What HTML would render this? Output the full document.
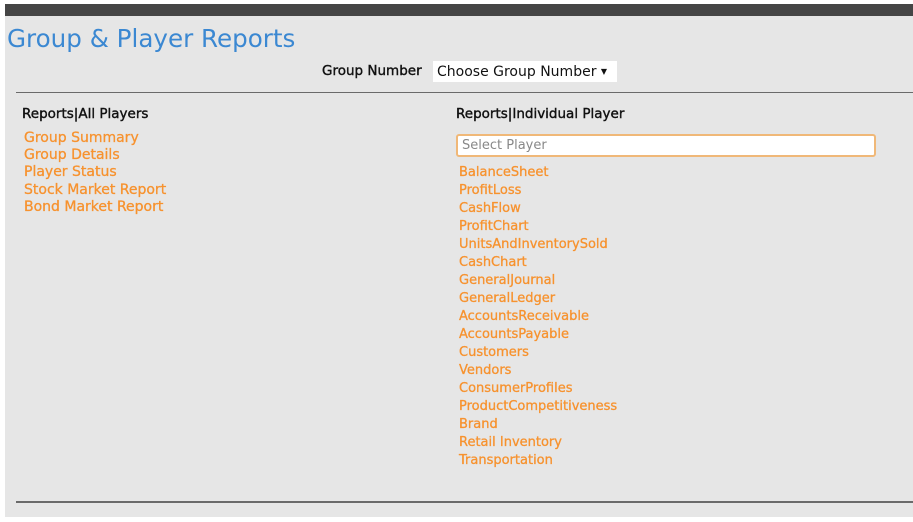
<!DOCTYPE html>
<html><head><style>
body{margin:0;width:913px;height:522px;background:#fff;position:relative;overflow:hidden;font-family:"DejaVu Sans","Liberation Sans",sans-serif}
.bg{position:absolute;left:5px;top:4px;width:908px;height:513px;background:#e6e6e6}
.bar{position:absolute;left:5px;top:4px;width:908px;height:12px;background:#454545}
.t{position:absolute;left:7px;top:24px;font-size:24.6px;color:#3b88d2;white-space:nowrap}
.gn{position:absolute;left:322px;top:63px;font-size:13.5px;color:#111;-webkit-text-stroke:0.4px #111;white-space:nowrap}
.sel{position:absolute;left:433px;top:61px;width:184px;height:21px;background:#fff;font-size:14px;color:#111;line-height:21px;padding-left:4px;box-sizing:border-box;white-space:nowrap}
.hr{position:absolute;left:16px;width:897px;height:1px;background:#6a6a6a}
.h{position:absolute;font-size:13.5px;color:#111;-webkit-text-stroke:0.4px #111;white-space:nowrap}
.l{position:absolute;left:24px;top:130px;font-size:14px;line-height:17.2px;color:#f7922e;-webkit-text-stroke:0.3px #f7922e}
.r{position:absolute;left:459px;top:164px;font-size:13px;line-height:18px;color:#f7922e;-webkit-text-stroke:0.3px #f7922e}
.inp{position:absolute;left:456px;top:134px;width:420px;height:23px;box-sizing:border-box;border:2px solid #f0b878;border-radius:3px;background:#fff;font-size:13px;color:#888;padding-left:4px;line-height:19px}
</style></head><body>
<div class="bg"></div><div class="bar"></div>
<div class="t">Group &amp; Player Reports</div>
<div class="gn">Group Number</div>
<div class="sel">Choose Group Number <span style="font-size:8px;vertical-align:2px">▼</span></div>
<div class="hr" style="top:92px"></div>
<div class="h" style="left:22px;top:106px">Reports|All Players</div>
<div class="l">Group Summary<br>Group Details<br>Player Status<br>Stock Market Report<br>Bond Market Report</div>
<div class="h" style="left:456px;top:106px">Reports|Individual Player</div>
<div class="inp">Select Player</div>
<div class="r">BalanceSheet<br>ProfitLoss<br>CashFlow<br>ProfitChart<br>UnitsAndInventorySold<br>CashChart<br>GeneralJournal<br>GeneralLedger<br>AccountsReceivable<br>AccountsPayable<br>Customers<br>Vendors<br>ConsumerProfiles<br>ProductCompetitiveness<br>Brand<br>Retail Inventory<br>Transportation</div>
<div class="hr" style="top:501px;height:2px"></div>
</body></html>
